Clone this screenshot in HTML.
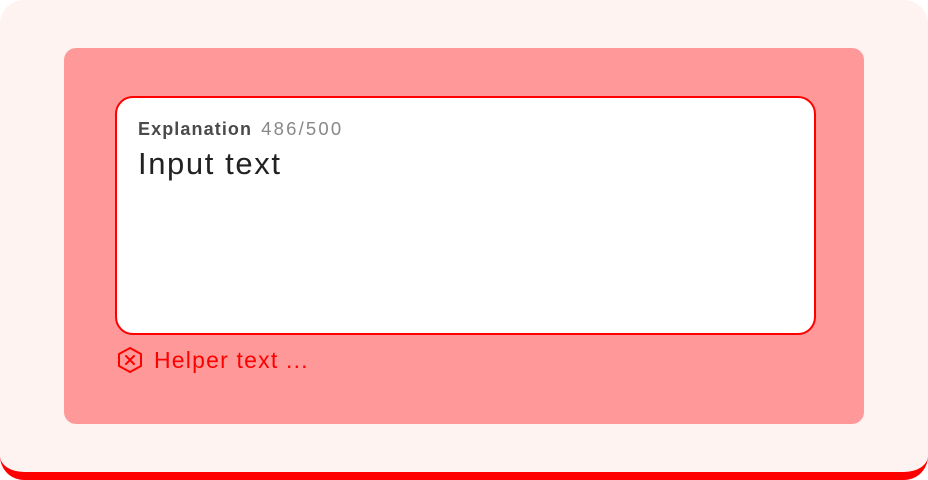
<!DOCTYPE html>
<html><head><style>
html,body{margin:0;padding:0;background:#fff;}
body{width:928px;height:480px;position:relative;overflow:hidden;font-family:"Liberation Sans",sans-serif;}
.outer{position:absolute;left:0;top:0;width:928px;height:472px;background:#fff3f2;border-radius:24px;border-bottom:8px solid #ff0000;box-sizing:content-box;}
.red{position:absolute;left:64px;top:48px;width:800px;height:376px;background:#ff9999;border-radius:12px;}
.box{position:absolute;left:115px;top:96px;width:697px;height:235px;background:#fff;border:2px solid #ff0000;border-radius:18px;}
.lab{position:absolute;left:21px;top:20px;font-size:18px;color:#4a4a4a;white-space:nowrap;}
.lab b{font-weight:bold;letter-spacing:1.1px;}
.lab span{color:#888;margin-left:9px;letter-spacing:2.2px;font-size:18.5px;}
.inp{position:absolute;left:21px;top:48px;font-size:31px;color:#222;letter-spacing:1.6px;}
.help{position:absolute;left:116px;top:346px;display:flex;align-items:center;color:#ff0000;font-size:23px;letter-spacing:1.2px;}
.help svg{margin-right:10px;}
</style></head><body>
<div class="outer"></div>
<div class="red"></div>
<div class="box">
<div class="lab"><b>Explanation</b><span>486/500</span></div>
<div class="inp">Input text</div>
</div>
<div class="help">
<svg width="28" height="28" viewBox="0 0 28 28" fill="none" stroke="#ff0000" stroke-width="2" stroke-linejoin="round" stroke-linecap="round">
<path d="M14 2 L25 8 L25 20 L14 26 L3 20 L3 8 Z"/>
<path d="M10 10 L18 18 M18 10 L10 18"/>
</svg>
<span>Helper text ...</span>
</div>
</body></html>
